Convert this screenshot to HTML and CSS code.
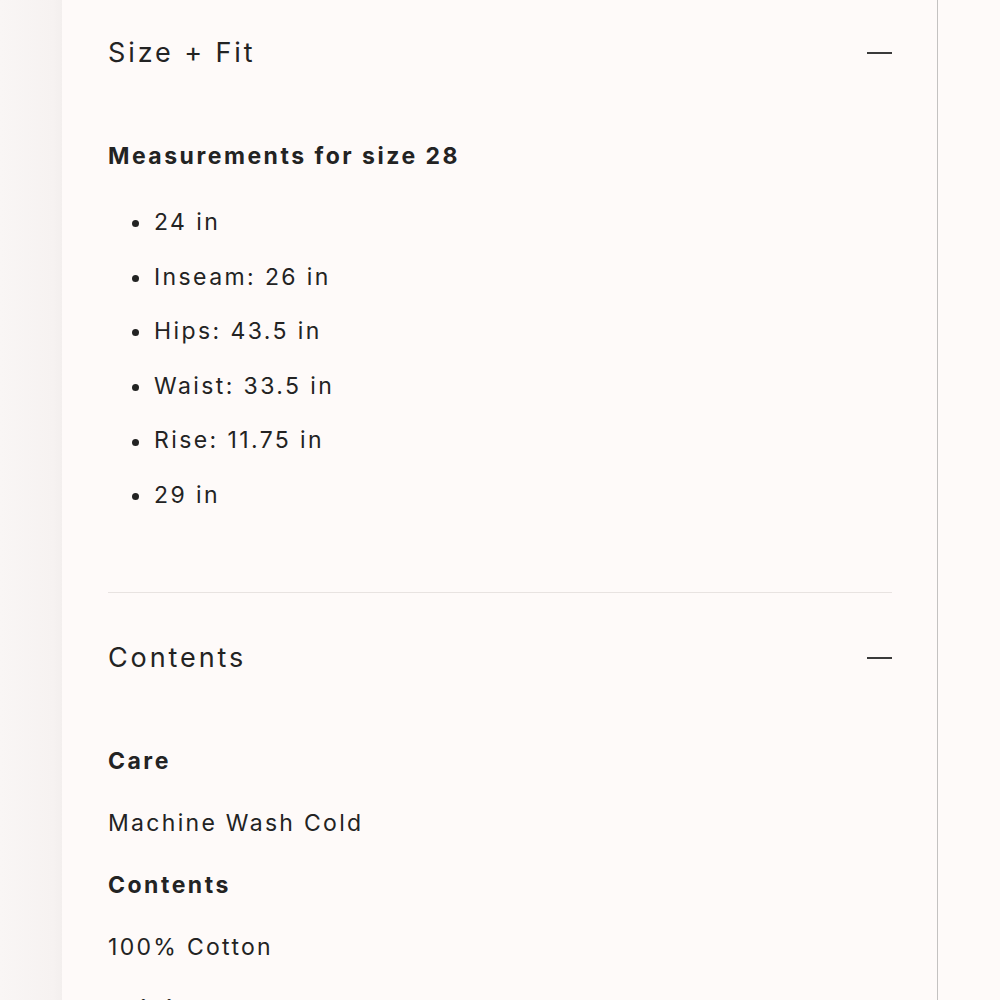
FILE: index.html
```html
<!DOCTYPE html>
<html lang="en">
<head>
<meta charset="utf-8">
<title>Size + Fit</title>
<link rel="stylesheet" href="styles.css">
</head>
<body>
<div class="page">
  <div class="side side-left"></div>
  <main class="panel">
    <div class="accordion">
      <section class="acc-item">
        <div class="acc-head">
          <h3 class="acc-title">Size + Fit</h3>
          <span class="minus"></span>
        </div>
        <div class="acc-body">
          <h4 class="label">Measurements for size 28</h4>
          <ul class="list">
            <li>24 in</li>
            <li>Inseam: 26 in</li>
            <li>Hips: 43.5 in</li>
            <li>Waist: 33.5 in</li>
            <li>Rise: 11.75 in</li>
            <li>29 in</li>
          </ul>
        </div>
      </section>
      <section class="acc-item acc-item-last">
        <div class="acc-head">
          <h3 class="acc-title">Contents</h3>
          <span class="minus"></span>
        </div>
        <div class="acc-body">
          <h4 class="label">Care</h4>
          <p class="text">Machine Wash Cold</p>
          <h4 class="label">Contents</h4>
          <p class="text">100% Cotton</p>
          <h4 class="label">Origin</h4>
        </div>
      </section>
    </div>
  </main>
  <div class="side side-right"></div>
</div>
</body>
</html>
```

FILE: styles.css
```css
html, body {
  margin: 0;
  padding: 0;
  height: 100%;
  overflow: hidden;
  background: #fefaf9;
}

.page {
  display: flex;
  width: 1000px;
  height: 1000px;
  font-family: "Inter", "Liberation Sans", sans-serif;
  color: #232323;
}

.side {
  flex: none;
}

.side-left {
  width: 62px;
  background: linear-gradient(to right, #f9f6f5 0%, #f6f2f1 85%, #f3efee 100%);
}

.side-right {
  flex: 1;
  background: #fefaf9;
}

.panel {
  flex: none;
  width: 784px;
  padding: 0 45px 0 46px;
  background: #fefaf9;
  border-right: 1px solid #c4c2c1;
}

.accordion {
  margin-top: -12px;
}

.acc-item {
  border-bottom: 1px solid #e8e3e1;
  padding-bottom: 69px;
}

.acc-item-last {
  border-bottom: none;
}

.acc-head {
  height: 130px;
  display: flex;
  align-items: center;
  justify-content: space-between;
}

.acc-title {
  margin: 0;
  font-size: 27px;
  font-weight: 400;
  letter-spacing: 2.9px;
  line-height: 32px;
}

.minus {
  width: 25px;
  height: 2px;
  background: #3a3a3a;
}

.acc-body {
  padding-top: 22px;
}

.label {
  margin: 0;
  font-size: 23px;
  font-weight: 700;
  letter-spacing: 2.5px;
  line-height: 32px;
}

.text {
  margin: 30px 0;
  font-size: 23px;
  font-weight: 400;
  letter-spacing: 2.3px;
  line-height: 32px;
}

.list {
  list-style: none;
  margin: 23px 0 0;
  padding: 0 0 0 46px;
}

.list li {
  position: relative;
  font-size: 23px;
  letter-spacing: 2.4px;
  line-height: 54.6px;
}

.list li::before {
  content: "";
  position: absolute;
  left: -22px;
  top: 50%;
  width: 7px;
  height: 7px;
  margin-top: -2px;
  border-radius: 50%;
  background: #232323;
}
```
